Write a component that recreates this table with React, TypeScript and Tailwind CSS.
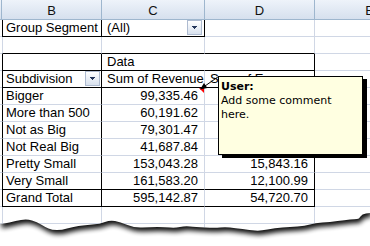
import React from 'react';

type Bd = 'k' | 'g' | 'w';
const RB: Record<Bd, string> = {
  k: 'border-r border-r-black',
  g: 'border-r border-r-[#d0d7e5]',
  w: 'border-r border-r-white',
};
const LB: Record<Bd, string> = {
  k: 'border-l border-l-black',
  g: 'border-l border-l-[#d0d7e5]',
  w: 'border-l border-l-white',
};
const BB: Record<Bd, string> = {
  k: 'border-b border-b-black',
  g: 'border-b border-b-[#d0d7e5]',
  w: 'border-b border-b-white',
};

function Cell({
  w,
  l,
  r,
  b,
  className = '',
  children,
}: {
  w: string;
  l?: Bd;
  r: Bd;
  b: Bd;
  className?: string;
  children?: React.ReactNode;
}) {
  return (
    <div
      className={`relative shrink-0 h-full overflow-hidden whitespace-nowrap ${w} ${l ? LB[l] : ''} ${RB[r]} ${BB[b]} ${className}`}
    >
      {children}
    </div>
  );
}

function Drop() {
  return (
    <div className="w-[15px] h-[15px] shrink-0 border border-[#aebbd0] bg-linear-to-b from-white to-[#d8e1ee] flex items-center justify-center">
      <svg width="5" height="3" viewBox="0 0 5 3">
        <rect x="0" y="0" width="5" height="1" fill="#24365a" />
        <rect x="1" y="1" width="3" height="1" fill="#24365a" />
        <rect x="2" y="2" width="1" height="1" fill="#24365a" />
      </svg>
    </div>
  );
}

function Row({ children }: { children: React.ReactNode }) {
  return <div className="flex h-[17px]">{children}</div>;
}

function Stub({ b = 'g' as Bd }) {
  return <div className={`w-[2px] shrink-0 h-full ${BB[b]}`} />;
}

const wave: [number, number][] = [
  [0, 224], [8, 223], [15, 221], [27, 219], [37, 222], [45, 227], [52, 230], [62, 230],
  [72, 227], [85, 225], [100, 224], [110, 220], [120, 222], [135, 228], [150, 227],
  [165, 227], [175, 228], [185, 226], [195, 227], [215, 228], [225, 227], [235, 228],
  [250, 230], [260, 231], [275, 228], [290, 227], [305, 226], [315, 223], [330, 222],
  [345, 220], [355, 219], [359, 219], [362, 214], [370, 213],
];

function wavePath() {
  let d = `M ${wave[0][0]} ${wave[0][1]}`;
  for (let i = 1; i < wave.length - 1; i++) {
    const [x, y] = wave[i];
    const [nx, ny] = wave[i + 1];
    d += ` Q ${x} ${y} ${(x + nx) / 2} ${(y + ny) / 2}`;
  }
  const last = wave[wave.length - 1];
  d += ` L ${last[0]} ${last[1]}`;
  return d;
}

export default function App() {
  const data = [
    ['Bigger', '99,335.46', '9,871.20'],
    ['More than 500', '60,191.62', '6,402.95'],
    ['Not as Big', '79,301.47', '7,118.34'],
    ['Not Real Big', '41,687.84', '3,384.06'],
    ['Pretty Small', '153,043.28', '15,843.16'],
    ['Very Small', '161,583.20', '12,100.99'],
  ];
  const wp = wavePath();
  const below = `${wp} L 370 246 L 0 246 Z`;
  const paper = `${wp} L 370 200 L 0 200 Z`;

  return (
    <div className="relative w-[370px] h-[246px] overflow-hidden bg-white font-['Liberation_Sans',Arial,sans-serif] text-[13px] leading-[16px] text-black">
      {/* column headers */}
      <div className="flex h-[20px] bg-linear-to-b from-[#eef3fa] to-[#d6e0ee] border-b border-b-[#9eb6ce] text-[#111]">
        <div className="w-[2px] shrink-0 border-r border-r-[#9eb6ce]" />
        <div className="w-[100px] shrink-0 border-r border-r-[#9eb6ce] text-center pt-[3px]">B</div>
        <div className="w-[103px] shrink-0 border-r border-r-[#9eb6ce] text-center pt-[3px]">C</div>
        <div className="w-[110px] shrink-0 border-r border-r-[#9eb6ce] text-center pt-[3px]">D</div>
        <div className="w-[110px] shrink-0 border-r border-r-[#9eb6ce] text-center pt-[3px]">E</div>
      </div>

      {/* row: Group Segment */}
      <Row>
        <Stub />
        <Cell w="w-[100px]" l="k" r="k" b="k" className="pl-[3px]">Group Segment</Cell>
        <Cell w="w-[103px]" r="k" b="k" className="flex">
          <span className="flex-1 pl-[5px]">(All)</span>
          <div className="mr-[2px]">
            <Drop />
          </div>
        </Cell>
        <Cell w="w-[110px]" r="g" b="g" />
        <Cell w="w-[110px]" r="g" b="g" />
      </Row>

      {/* blank row */}
      <Row>
        <Stub />
        <Cell w="w-[100px]" l="g" r="g" b="k" />
        <Cell w="w-[103px]" r="g" b="k" />
        <Cell w="w-[110px]" r="g" b="k" />
        <Cell w="w-[110px]" r="g" b="g" />
      </Row>

      {/* Data row */}
      <Row>
        <Stub />
        <Cell w="w-[100px]" l="k" r="k" b="k" />
        <Cell w="w-[103px]" r="w" b="k" className="pl-[5px]">Data</Cell>
        <Cell w="w-[110px]" r="k" b="k" />
        <Cell w="w-[110px]" r="g" b="g" />
      </Row>

      {/* Subdivision header row */}
      <Row>
        <Stub />
        <Cell w="w-[100px]" l="k" r="k" b="k" className="flex">
          <span className="flex-1 pl-[3px]">Subdivision</span>
          <div className="mr-[1px]">
            <Drop />
          </div>
        </Cell>
        <Cell w="w-[103px]" r="g" b="k" className="pl-[5px]">Sum of Revenue</Cell>
        <Cell w="w-[110px]" r="k" b="k" className="pl-[5px]">Sum of Expense</Cell>
        <Cell w="w-[110px]" r="g" b="g" />
      </Row>

      {data.map(([name, rev, exp], i) => {
        const last = i === data.length - 1;
        const b: Bd = last ? 'k' : 'g';
        return (
          <Row key={name}>
            <Stub />
            <Cell w="w-[100px]" l="k" r="k" b={b} className="pl-[3px]">{name}</Cell>
            <Cell w="w-[103px]" r="g" b={b} className="text-right pr-[6px]">
              {rev}
              {i === 0 && (
                <svg className="absolute right-0 top-0" width="5" height="5" viewBox="0 0 5 5">
                  <polygon points="0,0 5,0 5,5" fill="#ff0000" />
                </svg>
              )}
            </Cell>
            <Cell w="w-[110px]" r="k" b={b} className="text-right pr-[6px]">{exp}</Cell>
            <Cell w="w-[110px]" r="g" b="g" />
          </Row>
        );
      })}

      {/* Grand Total */}
      <Row>
        <Stub />
        <Cell w="w-[100px]" l="k" r="k" b="k" className="pl-[3px]">Grand Total</Cell>
        <Cell w="w-[103px]" r="g" b="k" className="text-right pr-[6px]">595,142.87</Cell>
        <Cell w="w-[110px]" r="k" b="k" className="text-right pr-[6px]">54,720.70</Cell>
        <Cell w="w-[110px]" r="g" b="g" />
      </Row>

      {[0, 1, 2].map((k) => (
        <Row key={`e${k}`}>
          <Stub />
          <Cell w="w-[100px]" l="g" r="g" b="g" />
          <Cell w="w-[103px]" r="g" b="g" />
          <Cell w="w-[110px]" r="g" b="g" />
          <Cell w="w-[110px]" r="g" b="g" />
        </Row>
      ))}

      {/* comment arrow */}
      <svg
        className="absolute left-0 top-0 pointer-events-none"
        width="370"
        height="246"
        viewBox="0 0 370 246"
      >
        <line x1="205" y1="86" x2="218.5" y2="76.5" stroke="#000" strokeWidth="1" />
        <polygon points="200,89.5 207.4,88 204,83" fill="#000" />
      </svg>

      {/* comment box */}
      <div className="absolute left-[218px] top-[76px] w-[145px] h-[79px] bg-[#ffffe1] border border-black shadow-[4px_3px_0_0_#000] font-['DejaVu_Sans',Verdana,sans-serif] text-[11px] leading-[14px] pl-[2px] pt-[3px]">
        <div className="font-bold">User:</div>
        <div>Add some comment</div>
        <div>here.</div>
      </div>

      {/* torn edge */}
      <svg
        className="absolute left-0 top-[200px] pointer-events-none"
        width="370"
        height="46"
        viewBox="0 200 370 46"
      >
        <defs>
          <clipPath id="belowClip">
            <path d={below} />
          </clipPath>
          <filter id="tornBlur" x="-10%" y="-50%" width="120%" height="200%">
            <feGaussianBlur stdDeviation="2.4" />
          </filter>
        </defs>
        <path d={below} fill="#ffffff" />
        <g clipPath="url(#belowClip)">
          <path d={paper} fill="#000" opacity="0.95" transform="translate(1.5 4)" filter="url(#tornBlur)" />
        </g>
      </svg>
    </div>
  );
}
